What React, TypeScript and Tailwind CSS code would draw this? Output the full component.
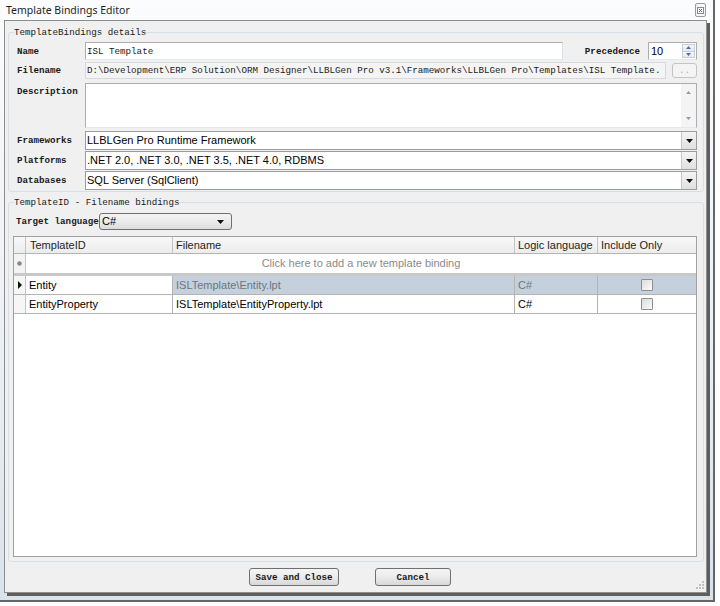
const mono = "font-['Liberation_Mono',monospace] text-[9.2px] leading-[11px] text-[#1a1a1a]";
const monoBold = "font-['Liberation_Mono',monospace] text-[9.2px] leading-[11px] font-bold text-[#1a1a1a]";
const sans = "font-['Liberation_Sans',Arial,sans-serif] text-[11px] leading-[13px]";

function Label({ children, top }: { children: React.ReactNode; top?: boolean }) {
  return (
    <div className={`w-[68px] shrink-0 ${top ? "self-start pt-[3px]" : ""} ${monoBold}`}>
      {children}
    </div>
  );
}

function DownArrow() {
  return (
    <svg width="7" height="4" viewBox="0 0 7 4">
      <path d="M0 0h7L3.5 4z" fill="#111" />
    </svg>
  );
}

function Combo({ value }: { value: string }) {
  return (
    <div className="flex h-full w-[612px] border border-[#9c9c9c] bg-white">
      <div className={`flex flex-1 items-center pl-[1px] ${sans} text-black`}>{value}</div>
      <div className="flex w-[15px] items-center justify-center border-l border-[#c8c8c8] bg-gradient-to-b from-[#f4f4f4] to-[#e0e0e0]">
        <DownArrow />
      </div>
    </div>
  );
}

function Checkbox() {
  return (
    <div className="h-[12px] w-[12px] rounded-[1px] border border-[#8f8f8f] bg-gradient-to-br from-[#dcdcdc] to-[#fbfbfb]" />
  );
}

const cols = "grid grid-cols-[12px_147px_342px_83px_1fr]";

export default function App() {
  return (
    <div className="h-[606px] w-[720px] overflow-hidden bg-white">
      <div className="flex h-[602px] w-[715px] flex-col border-b-2 border-r-2 border-[#666] bg-gradient-to-b from-[#fbfcfd] via-[#eef2f6] to-[#d9e3ec]">
        {/* title bar */}
        <div className="flex h-[20px] items-center pl-[6px] pr-[7px]">
          <span className="font-['Noto_Sans',sans-serif] text-[10.5px] leading-[14px] text-[#1e1e1e]">
            Template Bindings Editor
          </span>
          <div className="ml-auto mt-[3px] flex h-[14px] w-[11px] items-center justify-center self-start rounded-[2px] border border-[#9a9a9a] bg-[#f6f6f6]">
            <svg width="7" height="7" viewBox="0 0 7 7">
              <rect x="0.5" y="0.5" width="6" height="6" fill="none" stroke="#8a8a8a" />
              <path d="M2 2l3 3M5 2l-3 3" stroke="#6a6a6a" />
            </svg>
          </div>
        </div>

        {/* client */}
        <div className="ml-[4px] flex h-[573px] w-[703px] flex-col border border-[#8d8d8d] bg-[#f0f0f0] shadow-[3px_3px_0_#5e5e5e]">
          <fieldset className="ml-[3px] mr-[2px] mt-[6px] rounded-[3px] border border-[#d5dfe5] pb-[1px] pl-[8px] pr-[6px] pt-[4px]">
            <legend className={`-ml-[3px] ${mono}`}>TemplateBindings details</legend>

            <div className="flex h-[18px] items-center">
              <Label>Name</Label>
              <div className={`flex h-full w-[478px] items-center border border-[#abadb3] border-b-[#e3e9ef] border-r-[#dbdfe6] bg-white pl-[1px] ${mono}`}>
                ISL Template
              </div>
              <div className={`ml-auto mr-[8px] ${monoBold}`}>Precedence</div>
              <div className="flex h-full w-[49px] border border-[#abadb3] border-b-[#e3e9ef] bg-white">
                <div className={`flex flex-1 items-center pl-[2px] ${sans} text-black`}>10</div>
                <div className="my-[1px] mr-[1px] flex w-[13px] flex-col border border-[#c9ccd1]">
                  <div className="flex flex-1 items-center justify-center border-b border-[#c9ccd1] bg-gradient-to-b from-[#f6f8fb] to-[#e4eaf2]">
                    <svg width="5" height="3" viewBox="0 0 5 3">
                      <path d="M0 3h5L2.5 0z" fill="#4a6ea5" />
                    </svg>
                  </div>
                  <div className="flex flex-1 items-center justify-center bg-gradient-to-b from-[#f6f8fb] to-[#e4eaf2]">
                    <svg width="5" height="3" viewBox="0 0 5 3">
                      <path d="M0 0h5L2.5 3z" fill="#4a6ea5" />
                    </svg>
                  </div>
                </div>
              </div>
            </div>

            <div className="mt-[2px] flex h-[17px] items-center">
              <Label>Filename</Label>
              <div className={`flex h-full w-[581px] items-center overflow-hidden whitespace-nowrap border border-[#d6d9de] bg-[#f4f4f4] pl-[1px] ${mono}`}>
                D:\Development\ERP Solution\ORM Designer\LLBLGen Pro v3.1\Frameworks\LLBLGen Pro\Templates\ISL Template.
              </div>
              <div className={`ml-auto flex h-[15px] w-[25px] items-center justify-center rounded-[3px] border border-[#c4c4c4] bg-[#f4f4f4] ${mono} text-[#b0b0b0]`}>
                ..
              </div>
            </div>

            <div className="mt-[4px] flex h-[45px]">
              <Label top>Description</Label>
              <div className="flex h-full w-[612px] border border-[#abadb3] border-b-[#e3e9ef] bg-white">
                <div className="flex-1" />
                <div className="flex w-[15px] flex-col items-center justify-between bg-[#f4f4f4] py-[7px]">
                  <svg width="5" height="3" viewBox="0 0 5 3">
                    <path d="M0 3h5L2.5 0z" fill="#9a9a9a" />
                  </svg>
                  <svg width="5" height="3" viewBox="0 0 5 3">
                    <path d="M0 0h5L2.5 3z" fill="#9a9a9a" />
                  </svg>
                </div>
              </div>
            </div>

            <div className="mt-[3px] flex h-[19px] items-center">
              <Label>Frameworks</Label>
              <Combo value="LLBLGen Pro Runtime Framework" />
            </div>
            <div className="mt-[1px] flex h-[19px] items-center">
              <Label>Platforms</Label>
              <Combo value=".NET 2.0, .NET 3.0, .NET 3.5, .NET 4.0, RDBMS" />
            </div>
            <div className="mt-[1px] flex h-[19px] items-center">
              <Label>Databases</Label>
              <Combo value="SQL Server (SqlClient)" />
            </div>
          </fieldset>

          <fieldset className="ml-[3px] mr-[2px] mt-[5px] rounded-[3px] border border-[#d5dfe5] pb-[4px] pl-[4px] pr-[6px] pt-[5px]">
            <legend className={`ml-[1px] ${mono}`}>TemplateID - Filename bindings</legend>

            <div className="flex h-[17px] items-center">
              <div className={`ml-[3px] w-[83px] ${monoBold}`}>Target language</div>
              <div className="flex h-full w-[133px] items-center rounded-[3px] border border-[#707070] bg-gradient-to-b from-[#f3f3f3] via-[#ebebeb] to-[#dcdcdc] pl-[2px] pr-[7px]">
                <span className={`${sans} text-black`}>C#</span>
                <span className="ml-auto">
                  <DownArrow />
                </span>
              </div>
            </div>

            <div className={`mt-[6px] h-[321px] w-[684px] border border-[#a0a0a0] bg-white ${sans}`}>
              <div className={`${cols} h-[17px] border-b border-[#b4b4b4] bg-gradient-to-b from-[#f8f8f8] to-[#ececec] text-[#1e1e1e]`}>
                <div className="border-r border-[#c4c4c4]" />
                <div className="flex items-center border-r border-[#c4c4c4] pl-[4px]">TemplateID</div>
                <div className="flex items-center border-r border-[#c4c4c4] pl-[3px]">Filename</div>
                <div className="flex items-center border-r border-[#c4c4c4] pl-[3px]">Logic language</div>
                <div className="flex items-center pl-[3px]">Include Only</div>
              </div>

              <div className="flex h-[22px] border-b-[3px] border-[#c8c8c8]">
                <div className="flex w-[12px] items-center justify-center border-r border-[#c4c4c4] bg-[#f3f3f3]">
                  <svg width="5" height="5" viewBox="0 0 5 5">
                    <circle cx="2.5" cy="2.5" r="2.3" fill="#8a8a8a" />
                  </svg>
                </div>
                <div className="flex flex-1 items-center justify-center text-[#8a8a8a]">
                  Click here to add a new template binding
                </div>
              </div>

              <div className={`${cols} h-[19px] border-b border-[#b4b4b4]`}>
                <div className="flex items-center justify-center border-r border-[#c4c4c4] bg-[#f6f6f6]">
                  <svg width="4" height="8" viewBox="0 0 4 8">
                    <path d="M0 0l4 4-4 4z" fill="#111" />
                  </svg>
                </div>
                <div className="flex items-center border-r border-[#b4b4b4] bg-white pl-[3px] text-black">Entity</div>
                <div className="flex items-center border-r border-[#b4b4b4] bg-[#c4d0dc] pl-[3px] text-[#6c7680]">
                  ISLTemplate\Entity.lpt
                </div>
                <div className="flex items-center border-r border-[#b4b4b4] bg-[#c4d0dc] pl-[3px] text-[#6c7680]">C#</div>
                <div className="flex items-center justify-center bg-[#c4d0dc]">
                  <Checkbox />
                </div>
              </div>

              <div className={`${cols} h-[19px] border-b border-[#b4b4b4] text-black`}>
                <div className="border-r border-[#c4c4c4] bg-[#f6f6f6]" />
                <div className="flex items-center border-r border-[#b4b4b4] pl-[3px]">EntityProperty</div>
                <div className="flex items-center border-r border-[#b4b4b4] pl-[3px]">ISLTemplate\EntityProperty.lpt</div>
                <div className="flex items-center border-r border-[#b4b4b4] pl-[3px]">C#</div>
                <div className="flex items-center justify-center">
                  <Checkbox />
                </div>
              </div>
            </div>
          </fieldset>

          <div className="mt-[6px] flex flex-1">
            <button className={`ml-[244px] h-[18px] w-[90px] rounded-[3px] border border-[#707070] bg-gradient-to-b from-[#f4f4f4] via-[#ebebeb] to-[#d8d8d8] ${monoBold}`}>
              Save and Close
            </button>
            <button className={`ml-[36px] h-[18px] w-[76px] rounded-[3px] border border-[#707070] bg-gradient-to-b from-[#f4f4f4] via-[#ebebeb] to-[#d8d8d8] ${monoBold}`}>
              Cancel
            </button>
            <div className="mb-[3px] ml-auto mr-[2px] self-end">
              <svg width="8" height="8" viewBox="0 0 8 8">
                <rect x="6" y="0" width="2" height="2" fill="#c0c0c0" />
                <rect x="3" y="3" width="2" height="2" fill="#c0c0c0" />
                <rect x="6" y="3" width="2" height="2" fill="#c0c0c0" />
                <rect x="0" y="6" width="2" height="2" fill="#c0c0c0" />
                <rect x="3" y="6" width="2" height="2" fill="#c0c0c0" />
                <rect x="6" y="6" width="2" height="2" fill="#c0c0c0" />
              </svg>
            </div>
          </div>
        </div>
      </div>
    </div>
  );
}
